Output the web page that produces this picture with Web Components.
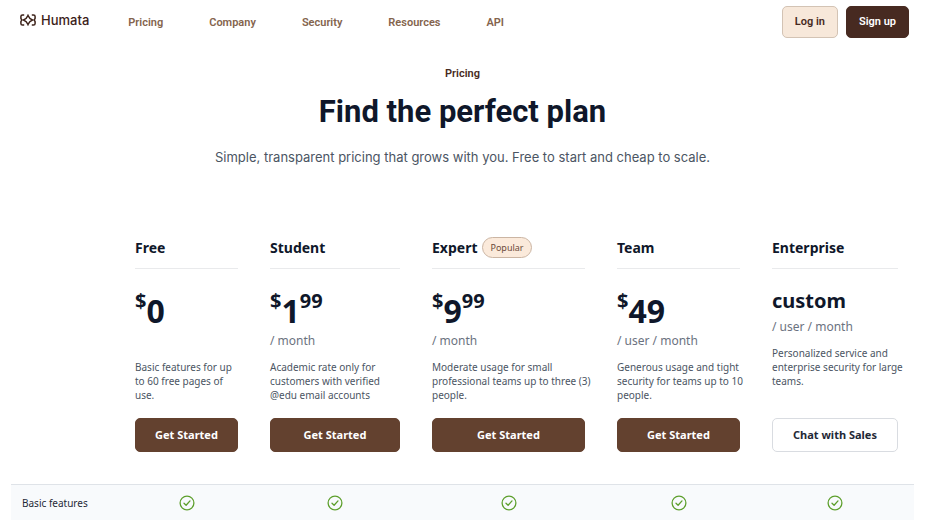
<!DOCTYPE html>
<html lang="en">
<head>
<meta charset="utf-8">
<meta name="viewport" content="width=device-width, initial-scale=1">
<title>Humata – Pricing</title>
<style>
  body { margin: 0; background: #fff; color: #0f172a; font-family: "Noto Sans", "Open Sans", sans-serif; }
</style>
</head>
<body>
<pricing-page></pricing-page>
<script>
function define(name, html, setup) {
  const template = document.createElement('template');
  template.innerHTML = html;
  customElements.define(name, class extends HTMLElement {
    constructor() {
      super();
      this.attachShadow({ mode: 'open' }).append(template.content.cloneNode(true));
    }
    connectedCallback() {
      if (setup) setup(this, this.shadowRoot);
    }
  });
}

define('brand-logo', `
  <style>
    :host { display: block; }
    a { display: flex; align-items: center; gap: 5px; color: #3b2118; text-decoration: none;
        font: 500 13px/16px Inter, sans-serif; }
    svg { display: block; }
  </style>
  <a href="#">
    <svg width="16" height="12" viewBox="0 0 16 12" fill="none" stroke="currentColor" stroke-width="1.5" aria-hidden="true">
      <path d="M4.2.9H2.5Q.9.9.9 2.5V4.3L1.7 6L.9 7.7V9.5Q.9 11.1 2.5 11.1H4.2"/>
      <path d="M11.8.9H13.5Q15.1.9 15.1 2.5V4.3L14.3 6L15.1 7.7V9.5Q15.1 11.1 13.5 11.1H11.8"/>
      <path d="M8 1.5Q9.3 4.7 12.5 6Q9.3 7.3 8 10.5Q6.7 7.3 3.5 6Q6.7 4.7 8 1.5Z"/>
    </svg>
    <span>Humata</span>
  </a>`);

define('nav-link', `
  <style>
    :host { display: block; }
    a { display: block; color: #84644d; text-decoration: none; font: 600 11px/16px Roboto, sans-serif; }
  </style>
  <a href="#"><slot></slot></a>`);

define('header-button', `
  <style>
    :host { display: block; }
    button { display: block; box-sizing: border-box; height: 32px; padding: 0 12px; border: 1px solid #d3c3b4;
      border-radius: 5px; background: #f7e8da; color: #472a21; font: 600 11px/16px Roboto, sans-serif; }
    :host([dark]) button { background: #472a21; border-color: #472a21; color: #fff; }
  </style>
  <button type="button"><slot></slot></button>`);

define('site-header', `
  <style>
    :host { display: block; }
    header { display: flex; align-items: flex-start; padding: 6px 16px 0 20px; }
    brand-logo { padding-top: 6px; margin-right: 39px; }
    nav { display: flex; gap: 46px; padding-top: 9px; flex: 1; }
    .actions { display: flex; gap: 8px; }
  </style>
  <header>
    <brand-logo></brand-logo>
    <nav aria-label="Main">
      <nav-link>Pricing</nav-link><nav-link>Company</nav-link><nav-link>Security</nav-link>
      <nav-link>Resources</nav-link><nav-link>API</nav-link>
    </nav>
    <div class="actions">
      <header-button>Log in</header-button>
      <header-button dark>Sign up</header-button>
    </div>
  </header>`);

define('page-hero', `
  <style>
    :host { display: block; text-align: center; padding: 28px 16px 70px; }
    .eyebrow { margin: 0; color: #472a21; font: 600 11px/16px Roboto, sans-serif; }
    h1 { margin: 10px 0 15px; font: 700 31px/40px Roboto, sans-serif; }
    .lead { margin: 0; color: #4b5563; font: 400 13px/20px Inter, sans-serif; }
  </style>
  <p class="eyebrow"><slot name="eyebrow"></slot></p>
  <h1><slot name="title"></slot></h1>
  <p class="lead"><slot></slot></p>`);

define('plan-name', `
  <style>
    :host { display: flex; align-items: center; gap: 5px; min-height: 21px; padding-bottom: 10px;
      border-bottom: 1px solid #e9eaec; font-weight: 700; font-size: 14px; line-height: 20px; }
  </style>
  <slot></slot>`);

define('plan-badge', `
  <style>
    :host { display: block; padding: 0 7px; border: 1px solid #cbb5a3; border-radius: 11px;
      background: #fbeadb; color: #6b4b3a; font-weight: 400; font-size: 9px; line-height: 19px; }
  </style>
  <slot></slot>`);

define('plan-price', `
  <style>
    :host { display: block; }
    .amount { display: flex; align-items: flex-start; color: #0f172a; font-weight: 700; }
    .small { font-size: 20px; line-height: 28px; }
    .big { font-size: 32px; line-height: 40px; padding-top: 4px; }
    .word { font-size: 20px; line-height: 28px; padding-bottom: 2px; }
    .period { min-height: 20px; color: #6b7280; font-size: 12px; line-height: 20px; }
    .text { margin: 9px 0 0; color: #4b5563; font-size: 10px; line-height: 14px; white-space: nowrap; }
  </style>
  <div class="amount"></div>
  <div class="period"></div>
  <p class="text"><slot></slot></p>`, (host, root) => {
    const amount = root.querySelector('.amount');
    const add = (cls, text) => {
      const span = document.createElement('span');
      span.className = cls;
      span.textContent = text;
      amount.append(span);
    };
    if (host.hasAttribute('word')) {
      add('word', host.getAttribute('word'));
    } else {
      add('small', '$');
      add('big', host.getAttribute('whole'));
      if (host.hasAttribute('cents')) add('small', host.getAttribute('cents'));
    }
    root.querySelector('.period').textContent = host.getAttribute('period') || '';
  });

define('plan-button', `
  <style>
    :host { display: block; }
    button { display: block; box-sizing: border-box; width: 100%; height: 34px; padding: 0; border: 1px solid #63412f;
      border-radius: 5px; background: #63412f; color: #fff; font: 700 11px/16px "Noto Sans", "Open Sans", sans-serif; }
    :host([outline]) button { background: #fff; border-color: #d9dce1; color: #1f2937; }
  </style>
  <button type="button"><slot></slot></button>`);

define('check-icon', `
  <style>
    :host { display: block; }
    svg { display: block; margin: 0 auto; }
  </style>
  <svg width="16" height="16" viewBox="0 0 16 16" fill="none" stroke="#5d9f2c" stroke-width="1.3"
    stroke-linecap="round" stroke-linejoin="round" role="img" aria-label="Included">
    <circle cx="8" cy="8" r="6.9"/>
    <path d="M5 8.3L7.1 10.3L11 5.9"/>
  </svg>`);

define('plan-table', `
  <style>
    :host { display: block; padding: 0 11px; }
    table { width: 100%; table-layout: fixed; border-collapse: separate; border-spacing: 0; }
    th, td { padding: 0 16px; text-align: left; vertical-align: top; font-weight: 400; }
    .prices td { padding-top: 18px; }
    .actions td { padding-top: 16px; padding-bottom: 32px; }
    .feature th, .feature td { padding-top: 10px; padding-bottom: 9px; background: #f8fafc;
      border-top: 1px solid #dfe3e8; }
    .feature th { padding-left: 11px; padding-right: 11px; color: #1f2937; font-size: 10px; line-height: 16px; }
  </style>
  <table>
    <colgroup>
      <col style="width:108px"><col style="width:135px"><col style="width:162px">
      <col style="width:185px"><col style="width:155px"><col style="width:158px">
    </colgroup>
    <thead>
      <tr>
        <td></td>
        <th scope="col"><plan-name>Free</plan-name></th>
        <th scope="col"><plan-name>Student</plan-name></th>
        <th scope="col"><plan-name>Expert <plan-badge>Popular</plan-badge></plan-name></th>
        <th scope="col"><plan-name>Team</plan-name></th>
        <th scope="col"><plan-name>Enterprise</plan-name></th>
      </tr>
    </thead>
    <tbody>
      <tr class="prices">
        <td></td>
        <td><plan-price whole="0">Basic features for up<br>to 60 free pages of<br>use.</plan-price></td>
        <td><plan-price whole="1" cents="99" period="/ month">Academic rate only for<br>customers with verified<br>@edu email accounts</plan-price></td>
        <td><plan-price whole="9" cents="99" period="/ month">Moderate usage for small<br>professional teams up to three (3)<br>people.</plan-price></td>
        <td><plan-price whole="49" period="/ user / month">Generous usage and tight<br>security for teams up to 10<br>people.</plan-price></td>
        <td><plan-price word="custom" period="/ user / month">Personalized service and<br>enterprise security for large<br>teams.</plan-price></td>
      </tr>
      <tr class="actions">
        <td></td>
        <td><plan-button>Get Started</plan-button></td>
        <td><plan-button>Get Started</plan-button></td>
        <td><plan-button>Get Started</plan-button></td>
        <td><plan-button>Get Started</plan-button></td>
        <td><plan-button outline>Chat with Sales</plan-button></td>
      </tr>
      <tr class="feature">
        <th scope="row">Basic features</th>
        <td><check-icon></check-icon></td>
        <td><check-icon></check-icon></td>
        <td><check-icon></check-icon></td>
        <td><check-icon></check-icon></td>
        <td><check-icon></check-icon></td>
      </tr>
    </tbody>
  </table>`);

define('pricing-page', `
  <style>:host { display: block; }</style>
  <site-header></site-header>
  <main>
    <page-hero>
      <span slot="eyebrow">Pricing</span>
      <span slot="title">Find the perfect plan</span>
      Simple, transparent pricing that grows with you. Free to start and cheap to scale.
    </page-hero>
    <plan-table></plan-table>
  </main>`);
</script>
</body>
</html>
